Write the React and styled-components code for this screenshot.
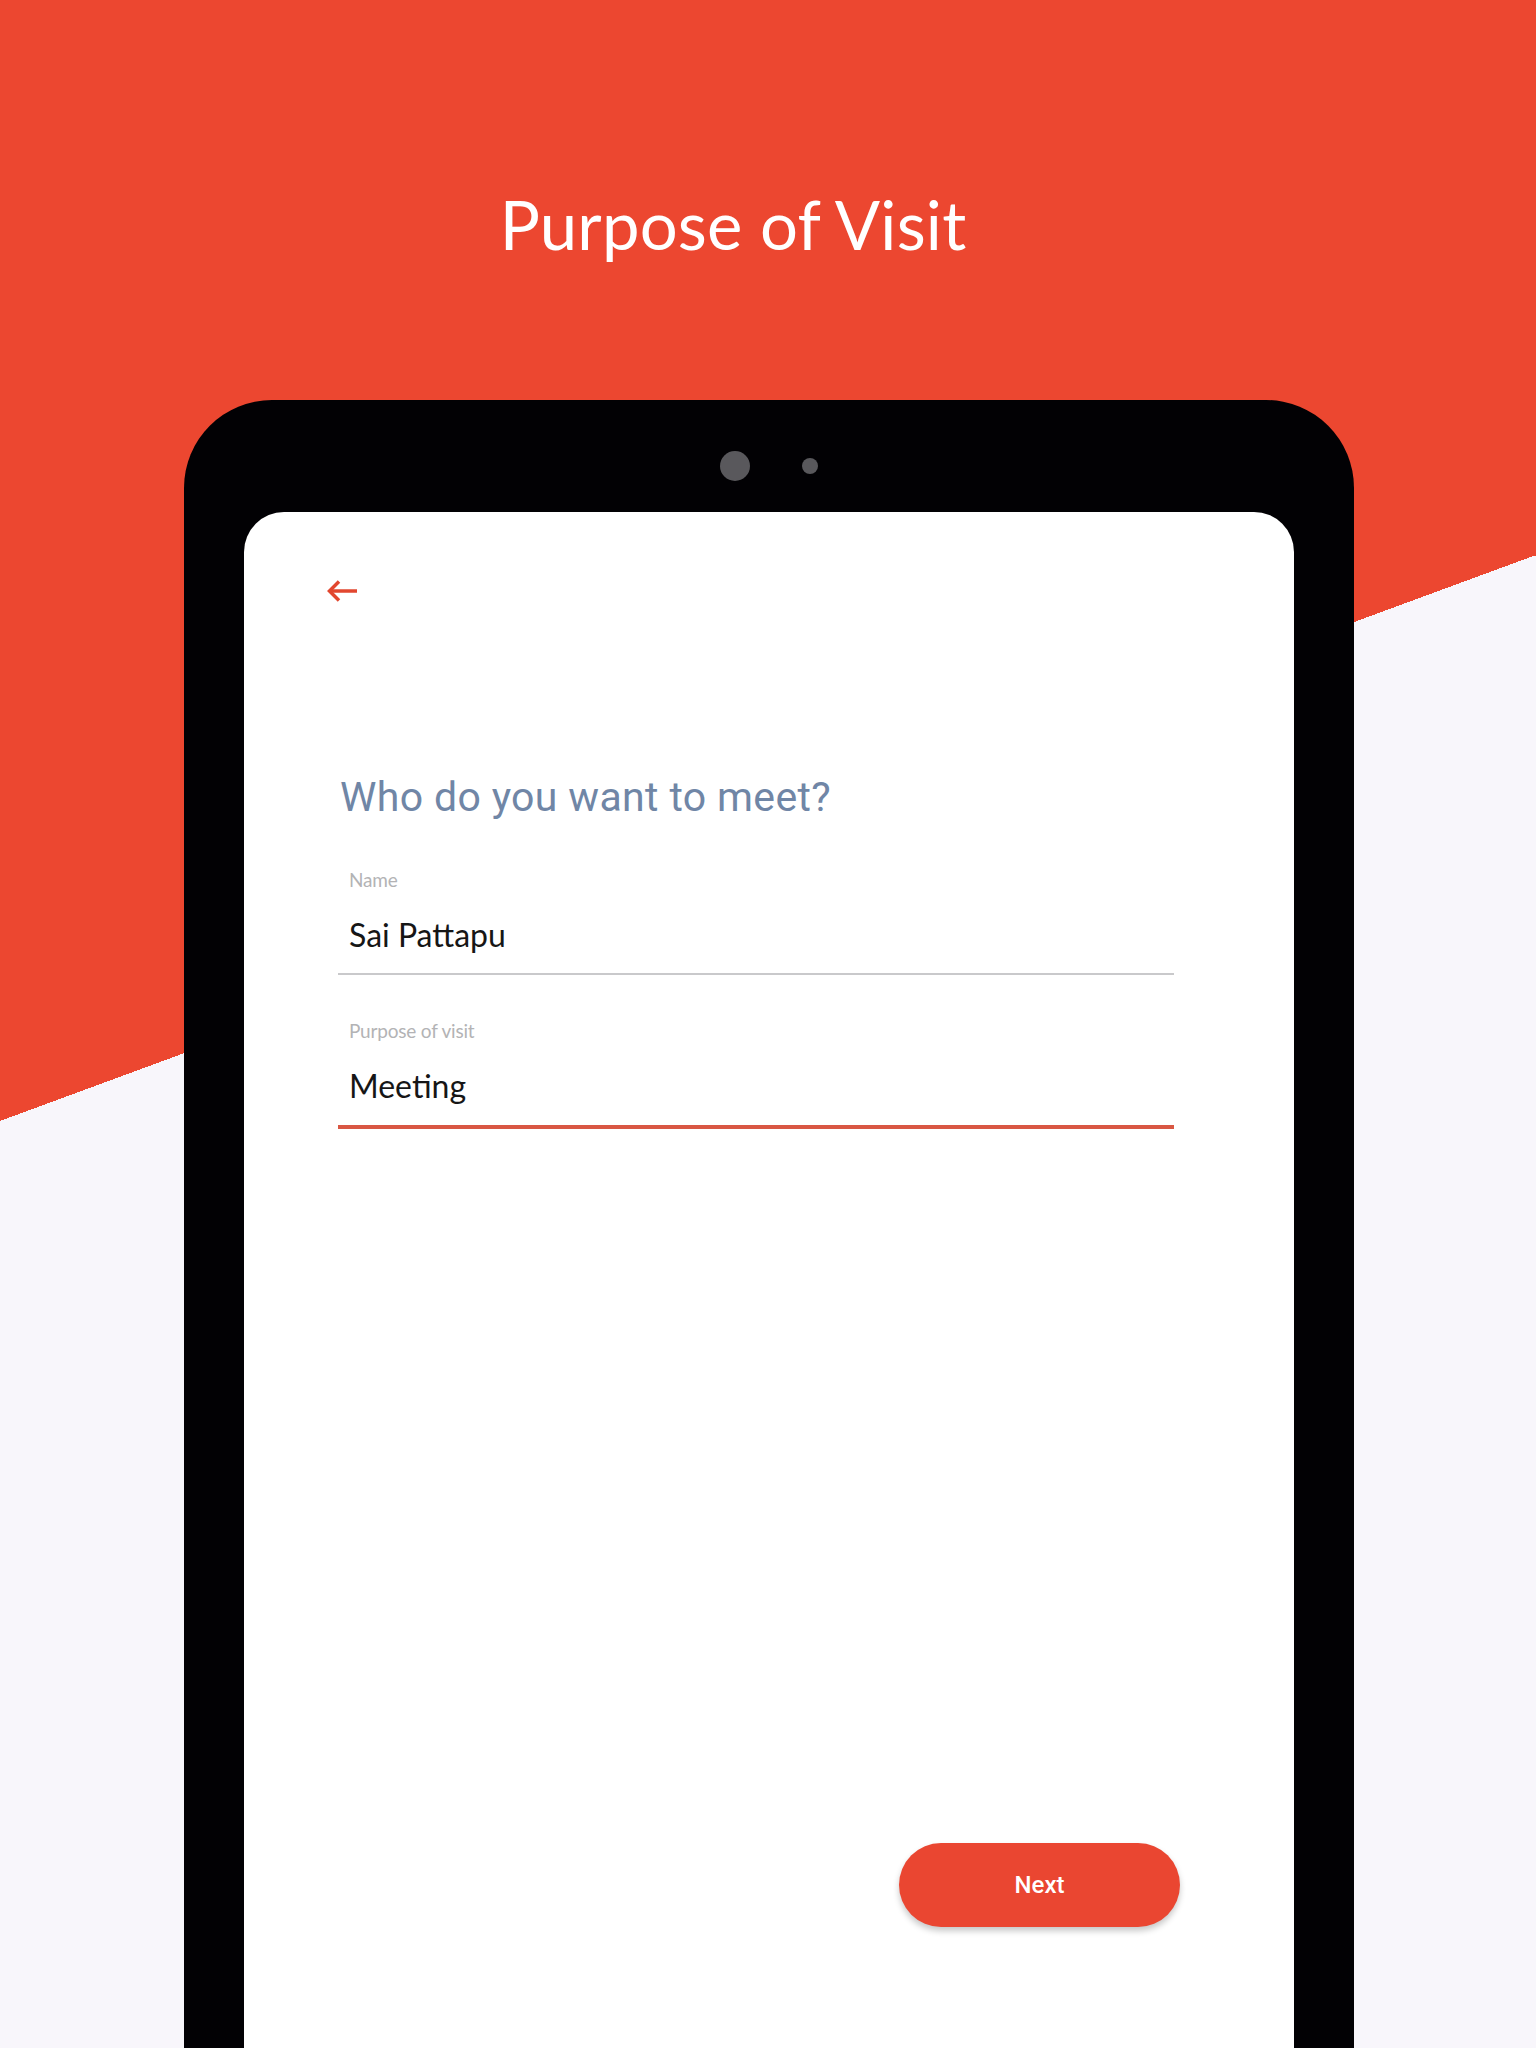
import styled, { createGlobalStyle } from "styled-components";

const GlobalStyle = createGlobalStyle`
  * {
    box-sizing: border-box;
  }
  body {
    margin: 0;
    font-family: "Lato", "Noto Sans", sans-serif;
  }
`;

const RED = "#ec4730";
const LIGHT = "#f8f6fb";

// red top, light bottom, split by a diagonal from (0,1121) to (1536,555)
const Page = styled.div`
  width: 1536px;
  min-height: 2048px;
  display: flex;
  flex-direction: column;
  background-color: ${LIGHT};
  background-image: linear-gradient(${RED}, ${RED}),
    linear-gradient(to bottom right, ${RED} 50%, ${LIGHT} 50%);
  background-repeat: no-repeat;
  background-position: 0 0, 0 555px;
  background-size: 100% 556px, 100% 566px;
`;

const Title = styled.h1`
  margin: 0;
  padding: 184px 70px 0 0;
  text-align: center;
  font-family: "Lato", sans-serif;
  font-weight: 400;
  font-size: 67px;
  line-height: 80px;
  color: #ffffff;
  letter-spacing: 0.2px;
`;

const Tablet = styled.div`
  flex: 1;
  display: flex;
  flex-direction: column;
  margin: 136px 182px 0 184px;
  padding: 0 60px;
  background: #020104;
  border-radius: 88px 88px 0 0;
`;

const CameraBar = styled.div`
  height: 112px;
  padding-top: 20px;
  display: flex;
  align-items: center;
  justify-content: center;
  gap: 52px;
`;

const Lens = styled.span`
  width: ${(p) => p.size}px;
  height: ${(p) => p.size}px;
  border-radius: 50%;
  background: #59585c;
`;

const Screen = styled.div`
  flex: 1;
  display: flex;
  flex-direction: column;
  background: #ffffff;
  border-radius: 40px 40px 0 0;
`;

const BackButton = styled.button`
  align-self: flex-start;
  margin: 67px 0 0 82px;
  padding: 0;
  border: none;
  background: none;
  display: flex;
  cursor: pointer;
`;

const Form = styled.div`
  flex: 1;
  display: flex;
  flex-direction: column;
  margin: 170px 120px 0 94px;
`;

const Heading = styled.h2`
  margin: 0 0 47px 2px;
  font-family: "Roboto", sans-serif;
  font-weight: 400;
  font-size: 41px;
  line-height: 48px;
  letter-spacing: 0.35px;
  color: #7086a6;
`;

const Field = styled.div`
  display: flex;
  flex-direction: column;
  gap: 23px;
  padding: 0 11px ${(p) => (p.focused ? 19 : 18)}px;
  margin-bottom: 44px;
  border-bottom: ${(p) => (p.focused ? "4px solid #d95743" : "2px solid #c9c9cb")};
`;

const Label = styled.label`
  font-family: "Lato", sans-serif;
  font-size: 19px;
  line-height: 24px;
  color: #b3b3b5;
  letter-spacing: -0.2px;
`;

const Value = styled.div`
  font-family: "Lato", sans-serif;
  font-size: 32px;
  line-height: 40px;
  color: #161616;
`;

const NextButton = styled.button`
  align-self: flex-end;
  margin: auto -6px 121px 0;
  width: 281px;
  height: 84px;
  border: none;
  border-radius: 42px;
  background: #ea4631;
  color: #ffffff;
  font-family: "Roboto", sans-serif;
  font-weight: 500;
  font-size: 24px;
  box-shadow: 0 4px 6px rgba(0, 0, 0, 0.22);
  cursor: pointer;
`;

function ArrowBack() {
  return (
    <svg width="32" height="24" viewBox="0 0 32 24" fill="none">
      <path d="M31 12H3.5" stroke="#e2472f" strokeWidth="3.5" />
      <path d="M13 2.5L3.5 12l9.5 9.5" stroke="#e2472f" strokeWidth="3.5" />
    </svg>
  );
}

export default function App() {
  return (
    <>
      <GlobalStyle />
      <Page>
        <Title>Purpose of Visit</Title>
        <Tablet>
          <CameraBar>
            <Lens size={30} />
            <Lens size={16} />
          </CameraBar>
          <Screen>
            <BackButton aria-label="Back">
              <ArrowBack />
            </BackButton>
            <Form>
              <Heading>Who do you want to meet?</Heading>
              <Field>
                <Label>Name</Label>
                <Value>Sai Pattapu</Value>
              </Field>
              <Field focused>
                <Label>Purpose of visit</Label>
                <Value>Meeting</Value>
              </Field>
              <NextButton>Next</NextButton>
            </Form>
          </Screen>
        </Tablet>
      </Page>
    </>
  );
}
